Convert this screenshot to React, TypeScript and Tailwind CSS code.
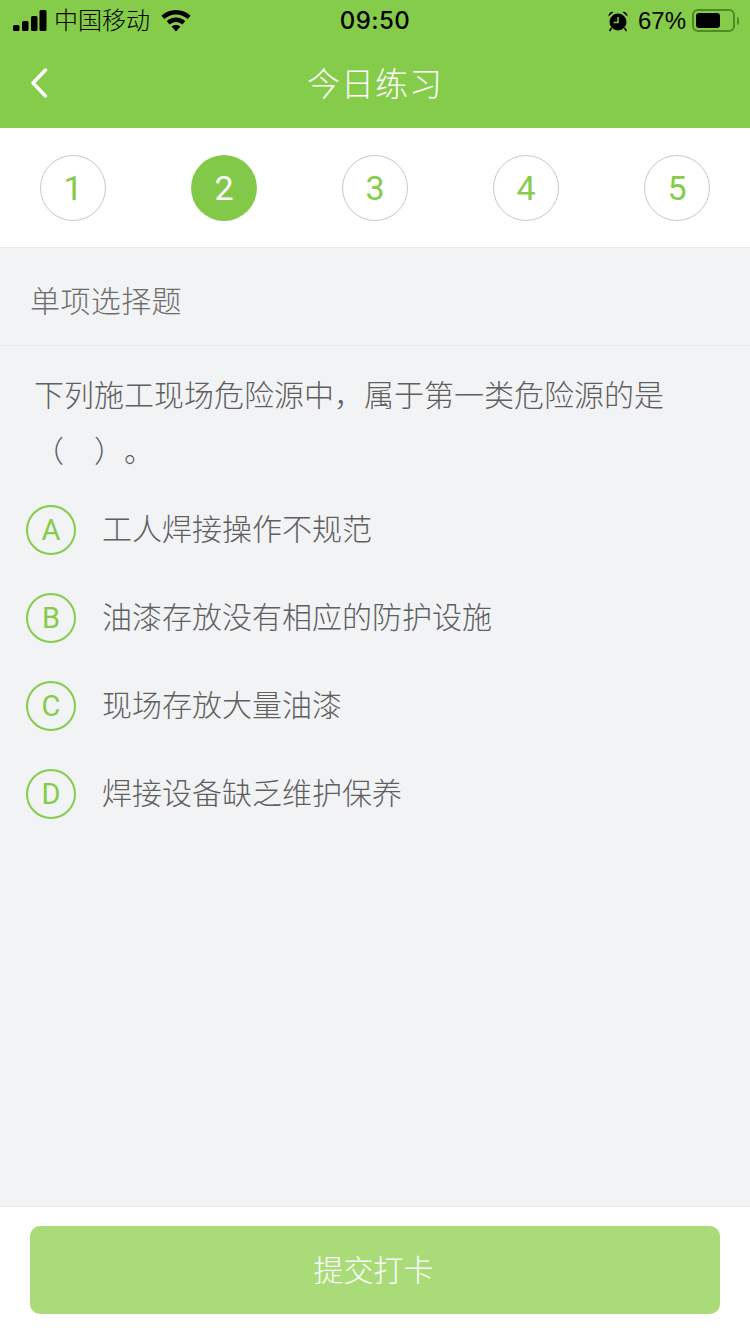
const fontStack = '"Liberation Sans", "Noto Sans CJK SC", sans-serif';

const steps = [1, 2, 3, 4, 5];
const activeStep = 2;

const options = [
  { key: 'A', text: '工人焊接操作不规范' },
  { key: 'B', text: '油漆存放没有相应的防护设施' },
  { key: 'C', text: '现场存放大量油漆' },
  { key: 'D', text: '焊接设备缺乏维护保养' },
];

const StatusBar = () => (
  <div className="relative flex h-10 items-center justify-between pl-[13px] pr-[11px] pt-[1px] text-black">
    <div className="flex items-center">
      <svg width="34" height="22" viewBox="0 0 34 22" fill="#000">
        <rect x="0" y="15" width="6.500" height="6" rx="1.500" />
        <rect x="9" y="11" width="6.500" height="10" rx="1.500" />
        <rect x="18" y="6" width="6.500" height="15" rx="1.500" />
        <rect x="26.500" y="0" width="7" height="21" rx="1.500" />
      </svg>
      <span className="ml-[7px] text-[24px] leading-none font-light">中国移动</span>
      <svg className="ml-[11px]" width="30" height="22" viewBox="0 0 30 22" fill="#000">
        <path d="M15 0C9.300 0 4.200 2.200.4 5.800l3 3.200C6.400 6.100 10.500 4.400 15 4.400s8.600 1.700 11.600 4.600l3-3.200C25.800 2.200 20.700 0 15 0z" />
        <path d="M15 7.600c-3.600 0-6.800 1.400-9.300 3.600l3 3.200c1.700-1.500 3.900-2.500 6.300-2.500s4.600 1 6.300 2.500l3-3.200c-2.500-2.200-5.700-3.600-9.300-3.600z" />
        <path d="M15 14.900c-1.700 0-3.300.6-4.500 1.700L15 21.600l4.500-5c-1.200-1.100-2.800-1.700-4.500-1.700z" />
      </svg>
    </div>
    <span className="absolute left-0 right-0 text-center font-['Inter'] text-[24px] leading-none font-medium tracking-[0.5px]">09:50</span>
    <div className="flex items-center">
      <svg width="22" height="22" viewBox="0 0 22 22" fill="#000">
        <circle cx="11" cy="12" r="8.500" />
        <path d="M1.500 6.500a4 4 0 0 1 5-4.500zM20.500 6.500a4 4 0 0 0-5-4.500z" />
        <path d="M4.500 18l-2 3M17.500 18l2 3" stroke="#000" strokeWidth="1.600" />
        <path d="M11 7v5.500H6.500" stroke="#85cc4b" strokeWidth="1.500" fill="none" />
      </svg>
      <span className="ml-[9px] text-[24px] leading-none font-light">67%</span>
      <div className="ml-[6px] flex h-[23px] w-[43px] items-center rounded-[6px] border-2 border-[#4f8a25] p-[2px]">
        <div className="h-full w-[24px] rounded-[3px] bg-black" />
      </div>
      <div className="ml-[2px] h-[8px] w-[2px] rounded-r-sm bg-[#4f8a25]" />
    </div>
  </div>
);

export default function App() {
  return (
    <div className="flex h-[1334px] w-[750px] flex-col overflow-hidden bg-[#f2f3f5]" style={{ fontFamily: fontStack }}>
      <div className="h-32 bg-[#85cc4b]">
        <StatusBar />
        <div className="relative flex h-[88px] items-center justify-center">
          <svg className="absolute left-[29px] top-[27px]" width="20" height="32" viewBox="0 0 20 32" fill="none">
            <path d="M16.500 3 L4 16 L16.500 29" stroke="#fff" strokeWidth="3.500" strokeLinecap="round" strokeLinejoin="round" />
          </svg>
          <span className="text-[33px] leading-none font-light tracking-[1px] text-white">今日练习</span>
        </div>
      </div>

      <div className="flex h-[120px] items-start justify-between border-b border-[#e8e9eb] bg-white px-10 pt-[27px] font-['Roboto']">
        {steps.map((step) => (
          <div
            key={step}
            className={
              step === activeStep
                ? 'flex h-[66px] w-[66px] items-center justify-center rounded-full bg-[#82c94a] text-[34px] text-white'
                : 'flex h-[66px] w-[66px] items-center justify-center rounded-full border border-[#c8c8c8] text-[34px] text-[#85cc4b]'
            }
          >
            {step}
          </div>
        ))}
      </div>

      <div className="flex h-[98px] items-center border-b border-[#e8e9eb] pl-[30px] pt-[12px] pb-[2px] text-[30px] leading-none font-light tracking-[0.4px] text-[#6e6e6e]">
        单项选择题
      </div>

      <div className="pl-[34px] pr-[60px] pt-[22px] text-[30px] leading-[56px] font-light text-[#5f5f5f] [text-spacing-trim:space-all]">
        下列施工现场危险源中，属于第一类危险源的是（　）。
      </div>

      <div className="mt-[25px] flex flex-col gap-[38px] pl-[26px]">
        {options.map((option) => (
          <div key={option.key} className="flex items-center">
            <div className="flex h-[50px] w-[50px] items-center justify-center rounded-full border-2 border-[#85cc4b] pt-[2px] font-['Roboto'] text-[29px] text-[#85cc4b]">
              {option.key}
            </div>
            <span className="ml-[26px] text-[30px] leading-none font-light text-[#5f5f5f]">{option.text}</span>
          </div>
        ))}
      </div>

      <div className="mt-auto h-[128px] border-t border-[#e8e9eb] bg-white px-[30px] pt-[19px]">
        <button className="flex h-[88px] w-full items-center justify-center rounded-[10px] bg-[#a9dc78] pr-[3px] text-[30px] font-light text-white">
          提交打卡
        </button>
      </div>
    </div>
  );
}
